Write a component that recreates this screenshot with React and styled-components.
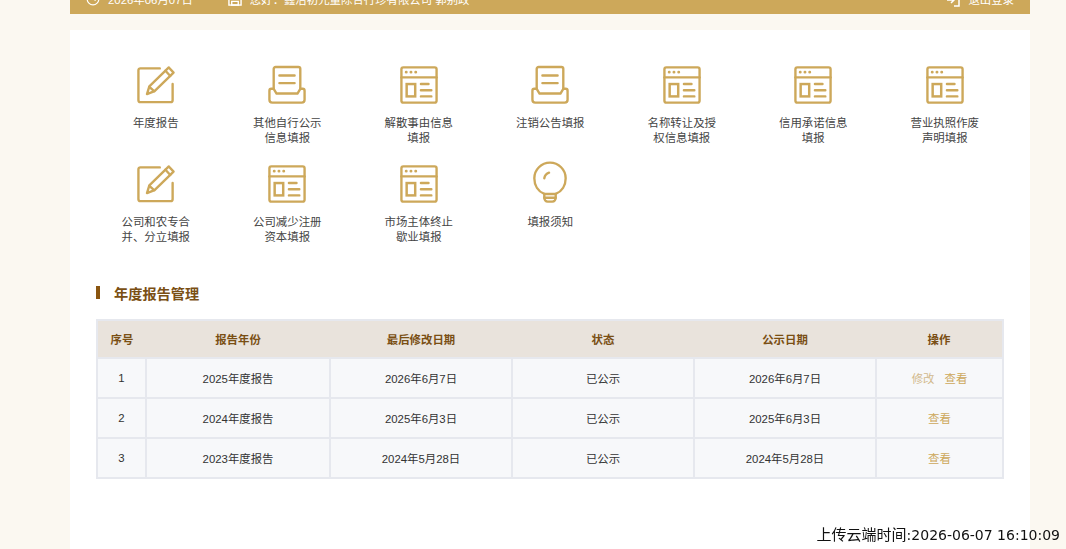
import React from 'react';
import styled, { createGlobalStyle } from 'styled-components';
import { Clock } from 'lucide-react';

const FONT = '"Liberation Sans", Arial, "Noto Sans CJK SC", sans-serif';

const GlobalStyle = createGlobalStyle`
  html, body {
    margin: 0;
    height: 100%;
    overflow: hidden;
    background: #fbf8f1;
    font-family: ${FONT};
  }
`;

const Page = styled.div`
  width: 960px;
  margin: -36px 0 0 70px;
`;

const TopBar = styled.header`
  height: 50px;
  background: #cda85a;
  color: #fff;
  font-size: 11.4px;
  display: flex;
  align-items: center;
  padding: 19px 16px 0;
  box-sizing: border-box;
`;

const TopItem = styled.span`
  display: flex;
  align-items: center;
  gap: 8px;
  white-space: nowrap;
  margin-right: ${(p) => p.$gap || 0}px;
  margin-left: ${(p) => (p.$end ? 'auto' : 0)};
`;

const Panel = styled.main`
  margin-top: 16px;
  background: #fff;
  padding: 35px 26px 80px;
`;

const IconGrid = styled.div`
  display: grid;
  grid-template-columns: repeat(7, 131.5px);
  grid-auto-rows: 99px;
  margin: 0 -6px;
`;

const IconItem = styled.a`
  display: flex;
  flex-direction: column;
  align-items: center;
  text-align: center;
  font-size: 11.4px;
  line-height: 15px;
  color: #444;
`;

const IconBox = styled.span`
  display: flex;
  align-items: center;
  justify-content: center;
  width: 40px;
  height: 40px;
  margin-bottom: 11px;
  color: #cda85a;
  svg {
    display: block;
    overflow: visible;
  }
`;

const Label = styled.span`
  width: 72px;
`;

const SectionTitle = styled.h3`
  margin: 20px 0 17px;
  height: 19px;
  display: flex;
  align-items: center;
  font-size: 14.2px;
  font-weight: 700;
  color: #7a4f14;
  &::before {
    content: '';
    width: 4px;
    height: 13px;
    background: #8a5510;
    margin-right: 14px;
  }
`;

const Table = styled.table`
  width: 906px;
  table-layout: fixed;
  border-collapse: collapse;
  font-size: 11.4px;
  color: #333;
  text-align: center;
  border: 2px solid #e6e8ee;
`;

const HeadCell = styled.th`
  height: 36px;
  padding: 0;
  background: #e9e3dc;
  color: #7a4f14;
  font-weight: 700;
`;

const Cell = styled.td`
  height: 38px;
  padding: 0;
  background: #f7f8fa;
  border: 2px solid #e6e8ee;
`;

const Action = styled.a`
  color: ${(p) => (p.$muted ? '#d2b88c' : '#cda85a')};
  & + & {
    margin-left: 10px;
  }
`;

const Stamp = styled.div`
  position: fixed;
  right: 6px;
  bottom: 5px;
  font-family: "DejaVu Sans", "Noto Sans CJK SC", sans-serif;
  font-size: 14px;
  line-height: 17px;
  color: #111;
  white-space: nowrap;
`;

const StampLabel = styled.span`
  font-size: 15px;
`;

const Svg = ({ children }) => (
  <svg width="38" height="38" viewBox="0 0 40 40" fill="none" stroke="currentColor" strokeWidth="2.500" strokeLinecap="round" strokeLinejoin="round">
    {children}
  </svg>
);

const EditIcon = () => (
  <Svg>
    <path d="M24 2.500H3.500a2 2 0 0 0-2 2V36a2 2 0 0 0 2 2h32a2 2 0 0 0 2-2V19" />
    <path d="M33.500 1.500l5 5.500-20 19.500-8 3 2.500-8z" />
    <path d="M30 5l5 5.500M13 22l5 4.500" />
  </Svg>
);

const TrayIcon = () => (
  <Svg>
    <path d="M6 24V3a2 2 0 0 1 2-2h24a2 2 0 0 1 2 2v21" />
    <path d="M12 10h16M12 18h16" />
    <path d="M6 24H3.500a2 2 0 0 0-2 2v9.500a3 3 0 0 0 3 3h31a3 3 0 0 0 3-3V26a2 2 0 0 0-2-2H34l-3 5H9z" />
  </Svg>
);

const WindowIcon = () => (
  <Svg>
    <rect x="1.500" y="1.500" width="37" height="37" rx="2" />
    <path d="M1.500 12h37" />
    <path d="M6.500 6.500h.1M11.500 6.500h.1M16.500 6.500h.1" strokeWidth="3" />
    <rect x="7" y="19" width="9" height="13" strokeWidth="2.600" strokeLinejoin="miter" />
    <path d="M22 19h8M22 25.500h11M22 32h11" />
  </Svg>
);

const BulbIcon = () => (
  <Svg>
    <path d="M14 30.500C7.500 28 3.500 21.500 3.500 14a16.500 16.500 0 0 1 33 0c0 7.500-4 14-10.500 16.500" />
    <path d="M14 30.500v4c0 2 1.500 4 3.500 4h5c2 0 3.500-2 3.500-4v-4z" />
    <path d="M14 34.500h12" />
    <path d="M14 14c.5-3 2-5 5-6" />
  </Svg>
);

const ICONS = { edit: EditIcon, tray: TrayIcon, window: WindowIcon, bulb: BulbIcon };

const ITEMS = [
  ['edit', '年度报告'],
  ['tray', '其他自行公示信息填报'],
  ['window', '解散事由信息填报'],
  ['tray', '注销公告填报'],
  ['window', '名称转让及授权信息填报'],
  ['window', '信用承诺信息填报'],
  ['window', '营业执照作废声明填报'],
  ['edit', '公司和农专合并、分立填报'],
  ['window', '公司减少注册资本填报'],
  ['window', '市场主体终止歇业填报'],
  ['bulb', '填报须知'],
];

const COLS = [
  ['序号', 49],
  ['报告年份', 184],
  ['最后修改日期', 182],
  ['状态', 182],
  ['公示日期', 182],
  ['操作', 127],
];

const ROWS = [
  ['1', '2025年度报告', '2026年6月7日', '已公示', '2026年6月7日', true],
  ['2', '2024年度报告', '2025年6月3日', '已公示', '2025年6月3日', false],
  ['3', '2023年度报告', '2024年5月28日', '已公示', '2024年5月28日', false],
];

export default function App() {
  return (
    <>
      <GlobalStyle />
      <Page>
        <TopBar>
          <TopItem $gap={35}>
            <Clock size={14} />
            2026年06月07日
          </TopItem>
          <TopItem>
            <svg width="14" height="14" viewBox="0 0 15 15" fill="none" stroke="currentColor" strokeWidth="1.500">
              <rect x="1" y="1" width="13" height="13" />
              <path d="M4 10h7v4H4z" />
            </svg>
            您好：鑫冶初光量除合行珍有限公司 郭别政
          </TopItem>
          <TopItem $end>
            <svg width="14" height="16" viewBox="0 0 14 16" fill="none" stroke="currentColor" strokeWidth="1.500">
              <path d="M5 2h8v13H8M1 9h7M5 6l3 3-3 3" />
            </svg>
            退出登录
          </TopItem>
        </TopBar>
        <Panel>
          <IconGrid>
            {ITEMS.map(([icon, text]) => {
              const Icon = ICONS[icon];
              return (
                <IconItem key={text}>
                  <IconBox>
                    <Icon />
                  </IconBox>
                  <Label>{text}</Label>
                </IconItem>
              );
            })}
          </IconGrid>
          <SectionTitle>年度报告管理</SectionTitle>
          <Table>
            <colgroup>
              {COLS.map(([name, w]) => (
                <col key={name} width={w} />
              ))}
            </colgroup>
            <thead>
              <tr>
                {COLS.map(([name]) => (
                  <HeadCell key={name}>{name}</HeadCell>
                ))}
              </tr>
            </thead>
            <tbody>
              {ROWS.map(([no, year, edited, status, published, canEdit]) => (
                <tr key={no}>
                  <Cell>{no}</Cell>
                  <Cell>{year}</Cell>
                  <Cell>{edited}</Cell>
                  <Cell>{status}</Cell>
                  <Cell>{published}</Cell>
                  <Cell>
                    {canEdit && <Action $muted>修改</Action>}
                    <Action>查看</Action>
                  </Cell>
                </tr>
              ))}
            </tbody>
          </Table>
        </Panel>
      </Page>
      <Stamp>
        <StampLabel>上传云端时间</StampLabel>:2026-06-07 16:10:09
      </Stamp>
    </>
  );
}
